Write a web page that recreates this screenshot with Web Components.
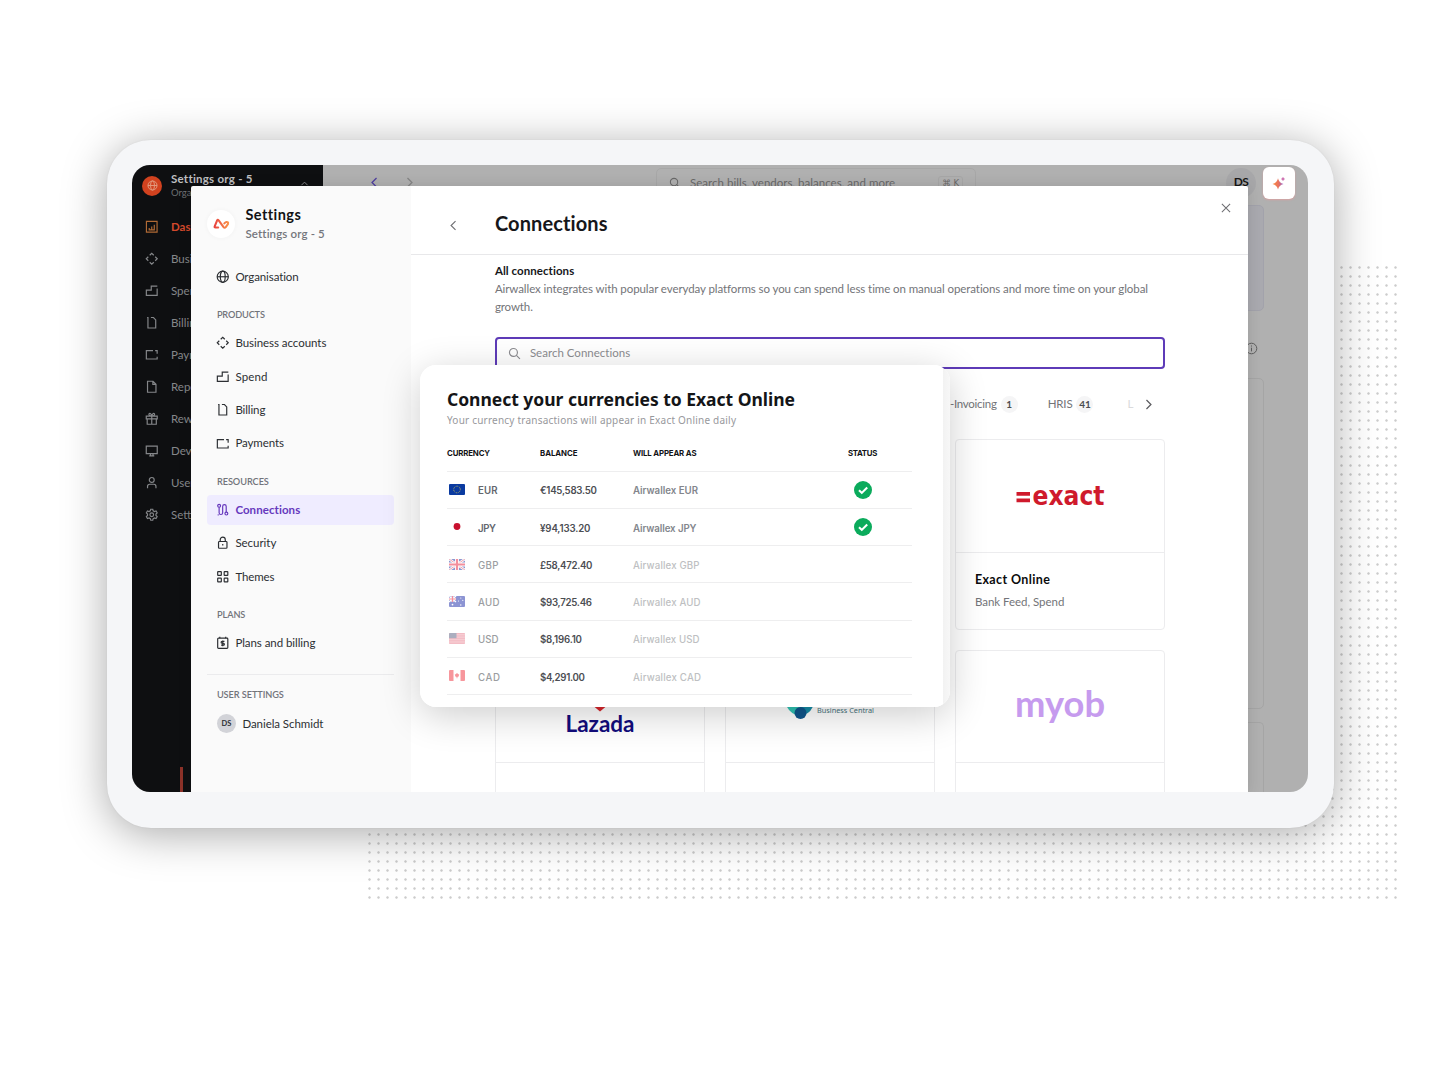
<!DOCTYPE html>
<html lang="en">
<head>
<meta charset="utf-8">
<title>Connections</title>
<style>
  html, body { margin: 0; background: #fff; }
  body {
    width: 1440px;
    height: 1068px;
    overflow: hidden;
    font-family: "Lato", "Liberation Sans", sans-serif;
    color: #2c2f33;
  }
</style>
</head>
<body>
<tablet-stage></tablet-stage>

<script>
// shadow root helper
const mount = function (elem, css, html) {
  const root = elem.attachShadow({ mode: "open" });
  root.innerHTML = `<style>*{box-sizing:border-box}${css}</style>${html}`;
  return root;
}

// icon drawings, 16 x 16 grid
const icons = {
  globe: '<circle cx="8" cy="8" r="6.6"/><ellipse cx="8" cy="8" rx="2.9" ry="6.6"/><path d="M1.4 8h13.2"/>',
  diamond: '<path d="M5.6 3.9 8 1.5l2.4 2.4M12.1 5.6 14.5 8l-2.4 2.4M10.4 12.1 8 14.5l-2.4-2.4M3.9 10.4 1.5 8l2.4-2.4"/>',
  spend: '<path d="M14.6 2.5H7.4v4.8H1.6v6.2h12.8V5.2"/>',
  billing: '<path d="M2.5 1.8h1v12.4h9.200V4.6L10 1.8H7"/>',
  payments: '<path d="M9.500 3.2H1.6v9.800h12.8v-2.600M14.4 6.800V3.2H12"/>',
  doc: '<path d="M3 1.5h6.5L13 5v9.5H3zM9.3 1.7V5.2h3.5"/>',
  gift: '<path d="M1.5 4.8h13v3.4h-13zM2.6 8.2v6.3h10.8V8.2M8 4.8v9.7M8 4.6C6 4.6 4.4 3.9 4.6 2.6 5 1 7.4 1.5 8 4.6 8.6 1.5 11 1 11.4 2.6 11.6 3.9 10 4.6 8 4.6"/>',
  screen: '<path d="M1.5 2.5h13v9h-13zM5 14h6M6.5 11.5V14M9.5 11.5V14"/>',
  user: '<circle cx="8" cy="4.7" r="2.9"/><path d="M3 14.5v-2.2c0-1.5 1-2.5 2.5-2.5h5c1.5 0 2.5 1 2.5 2.5v2.2"/>',
  gear: '<path d="M6.8 1.5h2.4l.5 1.9 1.5.8 1.9-.6 1.3 2.1-1.4 1.4v1.8l1.4 1.4-1.3 2.1-1.9-.6-1.5.8-.5 1.9H6.8l-.5-1.9-1.5-.8-1.9.6-1.3-2.1L3 8.9V7.1L1.6 5.7l1.3-2.1 1.9.6 1.5-.8z"/><circle cx="8" cy="8" r="2.2"/>',
  chart: '<path d="M1.7 1.7h12.6v12.6H1.7z"/><path d="M5 11.5V9.5M8 11.5V7.8M11 11.5V5.5M4.3 11.7h7.4"/>',
  link: '<circle cx="3.7" cy="3.3" r="1.7"/><path d="M3.7 5v6.5a2.1 2.1 0 0 0 4.2 0V4a2.1 2.1 0 0 1 4.2 0v6.8M2 14h1.2"/><circle cx="12.3" cy="12.5" r="1.7"/>',
  lock: '<rect x="3" y="6.5" width="10" height="8" rx="1"/><path d="M5 6.5V4.3a3 3 0 0 1 6 0v2.2M8 9.6v1.8"/>',
  grid: '<rect x="2" y="2" width="4.3" height="4.3" rx=".5"/><rect x="9.7" y="2" width="4.3" height="4.3" rx=".5"/><rect x="2" y="9.7" width="4.3" height="4.3" rx=".5"/><rect x="9.7" y="9.7" width="4.3" height="4.3" rx=".5"/>',
  plan: '<rect x="2" y="2.6" width="12" height="12" rx="1"/><path d="M4.5 1v1.6M11.5 1v1.6M10 6.3H7.2a1.1 1.1 0 0 0 0 2.3h1.6a1.1 1.1 0 0 1 0 2.3H6M8 5.2v6.8"/>',
  search: '<circle cx="6.7" cy="6.7" r="4.9"/><path d="m10.3 10.3 4.4 4.4"/>',
  left: '<path d="M10.5 2.5 5 8l5.5 5.5"/>',
  right: '<path d="M5.5 2.5 11 8l-5.5 5.5"/>',
  up: '<path d="M3.5 10.5 8 6l4.5 4.5"/>',
  close: '<path d="m2.5 2.5 11 11M13.5 2.5l-11 11"/>',
  info: '<circle cx="8" cy="8" r="6.5"/><path d="M8 7v4.5M8 4.3v1.3"/>'
};

class UiIcon extends HTMLElement {
  connectedCallback() {
    const size = this.getAttribute("size") || 13.5;
    const weight = this.getAttribute("weight") || 1.4;
    mount(this, `:host{display:block;flex:none;width:${size}px;height:${size}px} svg{display:block}`, `
      <svg width="${size}" height="${size}" viewBox="0 0 16 16" fill="none" stroke="currentColor" stroke-width="${weight}">
        ${icons[this.getAttribute("name")]}
      </svg>`);
  }
}

// Text run, tracked out or in to the width given in "w"
class UiText extends HTMLElement {
  connectedCallback() {
    const root = mount(this, ":host{display:block;white-space:nowrap;line-height:1.2}", "<span><slot></slot></span>");
    const w = parseFloat(this.getAttribute("w"));
    if (!w) return;
    const span = root.querySelector("span");
    const natural = span.getBoundingClientRect().width;
    span.style.letterSpacing = (w - natural) / (this.textContent.length - 1) + "px";
  }
}

// flags, 16 x 11 grid
const flags = {
  EUR: '<path fill="#0a3aa0" d="M0 0h16v11H0z"/><circle cx="8" cy="5.5" r="3.3" fill="none" stroke="#d8c95a" stroke-width=".9" stroke-dasharray=".8 .93"/>',
  JPY: '<path fill="#fff" d="M0 0h16v11H0z"/><circle cx="8" cy="5.5" r="3.4" fill="#c8102e"/>',
  GBP: '<path fill="#1b2fa0" d="M0 0h16v11H0z"/><path stroke="#fff" stroke-width="2.4" d="m0 0 16 11M16 0 0 11"/><path stroke="#e0304a" stroke-width=".9" d="m0 0 16 11M16 0 0 11"/><path stroke="#fff" stroke-width="4" d="M8 0v11M0 5.5h16"/><path stroke="#e8203c" stroke-width="2.2" d="M8 0v11M0 5.5h16"/>',
  AUD: '<path fill="#1c2ba8" d="M0 0h16v11H0z"/><path stroke="#fff" stroke-width="1.4" d="m0 0 7 6M7 0 0 6"/><path stroke="#fff" stroke-width="2.2" d="M3.5 0v6M0 3h7"/><path stroke="#e8203c" stroke-width="1.2" d="M3.5 0v6M0 3h7"/><g fill="#fff"><circle cx="3.5" cy="8.6" r=".9"/><circle cx="11.8" cy="2" r=".6"/><circle cx="11.8" cy="9" r=".7"/><circle cx="9.5" cy="5" r=".6"/><circle cx="13.8" cy="4.3" r=".6"/></g>',
  USD: '<path fill="#f2aab5" d="M0 0h16v11H0z"/><path stroke="#e56a7c" stroke-width=".8" d="M0 .5h16M0 2.2h16M0 3.9h16M0 5.6h16M0 7.3h16M0 9h16M0 10.6h16"/><path fill="#596080" d="M0 0h7.5v5.2H0z"/>',
  CAD: '<path fill="#fff" d="M0 0h16v11H0z"/><path fill="#f0303c" d="M0 0h4.5v11H0zM11.5 0H16v11h-4.5zM8 2.8l.9 1.3 1.3.4-.6 1.9-1.2.6v1.2h-.8V7l-1.2-.6-.6-1.9 1.3-.4z"/>'
};

class CountryFlag extends HTMLElement {
  connectedCallback() {
    mount(this, ":host{display:block;flex:none;width:16px;height:11px} svg{display:block;border-radius:1px}",
      `<svg width="16" height="11" viewBox="0 0 16 11">${flags[this.getAttribute("code")]}</svg>`);
  }
}

// Application behind the dialog
const appNav = [
  ["chart", "Dash"], ["diamond", "Busin"], ["spend", "Spen"],
  ["billing", "Billin"], ["payments", "Paym"], ["doc", "Repo"],
  ["gift", "Rewa"], ["screen", "Deve"], ["user", "User"], ["gear", "Settin"]
];

class AppSidebar extends HTMLElement {
  connectedCallback() {
    mount(this, `
      :host { display: flex; flex-direction: column; position: relative; width: 191px; background: #0e0f11; color: #85878a; font-size: 11.5px; overflow: hidden; }
      header { display: flex; align-items: center; gap: 9px; height: 41px; padding: 0 13px 0 10px; }
      .mark { display: flex; align-items: center; justify-content: center; width: 20px; height: 20px; border-radius: 50%; background: #d1421f; color: #e29c80; }
      .org { flex: 1; }
      .org ui-text:first-child { color: #bfbfc0; font-weight: 700; font-size: 11.5px; }
      .org ui-text:last-child { color: #6d6f73; font-size: 9.5px; margin-top: 1px; }
      header > ui-icon { margin-top: -5px; }
      nav { padding-top: 5px; }
      .row { display: flex; align-items: center; gap: 12.5px; height: 32px; padding-left: 13px; }
      .row:first-child { color: #d3492c; font-weight: 700; }
      .row:first-child ui-icon { color: #b06a35; }
      .row ui-text { width: 21px; overflow: hidden; }
      i { position: absolute; left: 48px; bottom: 0; width: 3px; height: 25px; background: #8d3229; }
    `, `
      <header>
        <span class="mark"><ui-icon name="globe" size="11"></ui-icon></span>
        <div class="org"><ui-text w="81">Settings org - 5</ui-text><ui-text>Orga</ui-text></div>
        <ui-icon name="up" size="11"></ui-icon>
      </header>
      <nav>${appNav.map(([icon, label]) => `<div class="row"><ui-icon name="${icon}"></ui-icon><ui-text>${label}</ui-text></div>`).join("")}</nav>
      <i></i>`);
  }
}

class AppBackdrop extends HTMLElement {
  connectedCallback() {
    mount(this, `
      :host { display: flex; flex-direction: column; flex: 1; background: #b0b0b0; color: #696969; }
      .bar { display: flex; align-items: center; height: 35px; padding: 0 67px 0 45px; }
      .bar > ui-icon:first-child { color: #4f3fa0; }
      .bar > ui-icon:nth-child(2) { margin-left: 22px; color: #858585; }
      .find { display: flex; align-items: center; gap: 9px; width: 320px; height: 30px; margin-left: 240px; padding: 0 12px; border: 1px solid #a7a7a7; border-radius: 5px; font-size: 11.5px; }
      kbd { margin-left: auto; padding: 0 3px; border: 1px solid #a7a7a7; border-radius: 3px; font: 8.5px/12px "DejaVu Sans", sans-serif; }
      .who { display: flex; align-items: center; justify-content: center; margin-left: auto; margin-right: -15px; width: 30px; height: 30px; border-radius: 50%; background: #a7a7a9; color: #161616; font-weight: 700; font-size: 12px; }
      .body { display: flex; flex-direction: column; margin: 5px 44.5px 0 0; flex: 1; }
      .a { height: 106px; background: #a9a9af; border: 1px solid #a2a2ab; border-radius: 5px; }
      .mid { display: flex; justify-content: flex-end; align-items: center; height: 67px; padding: 7px 6px 0 0; color: #5b5b5b; }
      .b { height: 331px; margin-bottom: 13px; border: 1px solid #a5a5a5; border-radius: 5px; }
      .c { flex: 1; border: 1px solid #a5a5a5; border-bottom: 0; border-radius: 5px 5px 0 0; }
    `, `
      <div class="bar">
        <ui-icon name="left" size="13" weight="1.6"></ui-icon>
        <ui-icon name="right" size="13" weight="1.6"></ui-icon>
        <div class="find"><ui-icon name="search" size="12"></ui-icon><ui-text w="205">Search bills, vendors, balances, and more</ui-text><kbd>⌘ K</kbd></div>
        <div class="who"><ui-text w="15">DS</ui-text></div>
      </div>
      <div class="body"><div class="a"></div><div class="mid"><ui-icon name="info" size="13" weight="1.2"></ui-icon></div><div class="b"></div><div class="c"></div></div>`);
  }
}

// Settings navigation
const settingsNav = [
  ["globe", "Organisation", 63.5],
  ["", "PRODUCTS", 48],
  ["diamond", "Business accounts", 91], ["spend", "Spend", 32], ["billing", "Billing", 30], ["payments", "Payments", 48.5],
  ["", "RESOURCES", 52],
  ["link", "Connections", 65], ["lock", "Security", 41], ["grid", "Themes", 39],
  ["", "PLANS", 28.5],
  ["plan", "Plans and billing", 80]
];

class SettingsNav extends HTMLElement {
  connectedCallback() {
    mount(this, `
      :host { display: flex; flex-direction: column; flex: none; width: 220px; padding: 0 17px 0 16px; background: #fafafa; font-size: 11.5px; }
      header { display: flex; align-items: center; gap: 10px; height: 74px; padding-top: 1px; }
      .logo { display: flex; align-items: center; justify-content: center; width: 28px; height: 28px; margin-top: 1px; border-radius: 50%; background: #fff; box-shadow: 0 0 5px rgba(0,0,0,.04); }
      h2 { margin: 0 0 3px; font-size: 14.5px; color: #111214; }
      .sub { font-size: 11.5px; font-weight: 600; color: #74767c; }
      .row { display: flex; align-items: center; gap: 5.5px; height: 29.6px; margin: 1.9px 0; padding-left: 9px; border-radius: 4px; }
      .row.active { background: #efecff; color: #6638bd; font-weight: 700; }
      .label { height: 33.1px; padding: 16px 0 0 9.5px; font-size: 9.2px; font-weight: 600; color: #72747a; }
      hr { height: 1px; width: 100%; margin: 14.5px 0 0; border: 0; background: #ebebed; }
      .last { height: 26px; padding-top: 14px; }
      .me { display: flex; align-items: center; gap: 6.5px; padding: 13px 0 0 9.5px; }
      .me b { width: 19px; height: 19px; border-radius: 50%; background: #d2d3d8; font-size: 7.5px; line-height: 19px; text-align: center; }
    `, `
      <header>
        <span class="logo"><svg width="17" height="12.5" viewBox="0 0 18 13" fill="none" stroke-width="2.2" stroke-linejoin="round" stroke-linecap="round">
          <defs><linearGradient id="g"><stop stop-color="#e8443f"/><stop offset="1" stop-color="#f9924a"/></linearGradient></defs>
          <path stroke="url(#g)" d="M5.5 10H2.6Q1.3 10 1.8 8.7L4.4 2.5Q5 1.3 6 2.4L11.2 9.5Q12.3 11 13.5 9.5L15.8 6.3Q16.6 4 14.3 4.1Q13.3 4.2 12 5.6"/></svg></span>
        <div><h2><ui-text w="55">Settings</ui-text></h2><ui-text class="sub" w="79">Settings org - 5</ui-text></div>
      </header>
      ${settingsNav.map(([icon, label, w]) => icon
        ? `<div class="row${label === "Connections" ? " active" : ""}"><ui-icon name="${icon}"></ui-icon><ui-text w="${w}">${label}</ui-text></div>`
        : `<div class="label"><ui-text w="${w}">${label}</ui-text></div>`).join("")}
      <hr>
      <div class="label last"><ui-text w="67">USER SETTINGS</ui-text></div>
      <div class="me"><b>DS</b><ui-text w="81">Daniela Schmidt</ui-text></div>`);
  }
}

class ConnectionCard extends HTMLElement {
  connectedCallback() {
    mount(this, `
      :host { display: block; height: 191px; border: 1px solid #ececee; border-radius: 4px; }
      .logo { display: flex; align-items: center; justify-content: center; height: 112.5px; border-bottom: 1px solid #ececee; }
      .text { padding: 19px 19px; }
    `, `<div class="logo"><slot name="logo"></slot></div><div class="text"><slot></slot></div>`);
  }
}

class ConnectionsPage extends HTMLElement {
  connectedCallback() {
    mount(this, `
      :host { display: block; flex: 1; background: #fff; font-size: 11.5px; color: #737478; }
      header { display: flex; height: 69px; padding: 0 16.5px 0 35.5px; border-bottom: 1px solid #e8e8ea; }
      header ui-icon:first-child { margin-top: 33px; color: #6e6e72; }
      h1 { margin: 24.5px auto 0 35px; font-size: 20px; line-height: 24px; color: #16171a; }
      header ui-icon:last-child { margin-top: 16px; color: #6e6e72; }
      main { padding: 9px 0 0 83.5px; width: 753.5px; }
      .t { font-weight: 700; color: #16171a; margin-bottom: 4px; }
      .d { margin-bottom: 4px; }
      .find { display: flex; align-items: center; gap: 9px; height: 32px; margin-top: 24px; padding: 0 11px; border: 2px solid #5e3bb8; border-radius: 4px; color: #8c8c90; }
      .tabs { display: flex; align-items: center; height: 70px; padding-left: 455px; }
      .tabs b { width: 17px; height: 17px; margin: 0 30px 0 4px; border-radius: 9px; background: #f5f5f6; color: #4c4d50; font-size: 10px; line-height: 17px; text-align: center; }
      .tabs .fade { color: #dadadc; margin-left: 4px; }
      .tabs ui-icon { margin-left: 9px; color: #5a5a5e; }
      .cards { display: grid; grid-template-columns: repeat(3, 210px); column-gap: 20px; row-gap: 19.5px; }
      .name { font-size: 12.5px; font-weight: 700; color: #0b0b0d; margin-bottom: 8px; }
      svg { display: block; overflow: visible; }
    `, `
      <header>
        <ui-icon name="left" size="13"></ui-icon>
        <h1><ui-text w="113">Connections</ui-text></h1>
        <ui-icon name="close" size="12"></ui-icon>
      </header>
      <main>
        <ui-text class="t" w="79.5">All connections</ui-text>
        <ui-text class="d" w="653.5">Airwallex integrates with popular everyday platforms so you can spend less time on manual operations and more time on your global</ui-text>
        <ui-text w="38">growth.</ui-text>
        <div class="find"><ui-icon name="search" size="13"></ui-icon><ui-text w="100.5">Search Connections</ui-text></div>
        <div class="tabs">
          <ui-text w="47">-Invoicing</ui-text><b>1</b>
          <ui-text w="25">HRIS</ui-text><b>41</b>
          <ui-text class="fade">L</ui-text>
          <ui-icon name="right" size="13" weight="1.5"></ui-icon>
        </div>
        <div class="cards">
          <connection-card></connection-card>
          <connection-card></connection-card>
          <connection-card>
            <svg slot="logo" width="90" height="34" viewBox="0 0 90 34" fill="#cf1a2c">
              <path d="M1.5 13H15v3.8H1.5zM1.5 19.5H15v3.8H1.5z"/>
              <text x="17.5" y="26" font-family="DejaVu Sans" font-weight="700" font-size="26.5" textLength="72" lengthAdjust="spacingAndGlyphs">exact</text>
            </svg>
            <ui-text class="name" w="75">Exact Online</ui-text>
            <ui-text w="89.5">Bank Feed, Spend</ui-text>
          </connection-card>
          <connection-card>
            <svg slot="logo" width="90" height="70" viewBox="0 0 90 70">
              <path fill="#d8262c" d="M36 32h18l-9 7.5z"/><path fill="#f26a3d" d="M36 30h9v5z"/>
              <text x="10.5" y="60" fill="#120c7c" font-family="Lato" font-weight="700" font-size="22" textLength="69" lengthAdjust="spacingAndGlyphs">Lazada</text>
            </svg>
          </connection-card>
          <connection-card>
            <svg slot="logo" width="90" height="40" viewBox="0 0 90 40">
              <path fill="#30c4b4" d="M1 16h27l-7 9-10 3q-9-4-10-12z"/><path fill="#158ba6" d="M13 16h16q-2 9-10 12z"/><circle cx="15.5" cy="26" r="6" fill="#0f568c"/>
              <text x="32" y="25.5" fill="#46727c" font-family="Noto Sans" font-size="7.5" textLength="57" lengthAdjust="spacingAndGlyphs">Business Central</text>
            </svg>
          </connection-card>
          <connection-card>
            <svg slot="logo" width="90" height="56" viewBox="0 0 90 56">
              <text x="0" y="37.5" fill="#c69bee" font-family="Lato" font-weight="700" font-size="37" textLength="90" lengthAdjust="spacingAndGlyphs">myob</text>
            </svg>
          </connection-card>
        </div>
      </main>`);
  }
}

class SettingsDialog extends HTMLElement {
  connectedCallback() {
    mount(this, `
      :host { position: absolute; left: 59.4px; top: 21px; right: 60px; bottom: -1px; display: flex; overflow: hidden; border-radius: 2px 2px 0 0; box-shadow: 0 0 14px rgba(0,0,0,.12); }
    `, `<settings-nav></settings-nav><connections-page></connections-page>`);
  }
}

// Currency table in the floating card
const currencies = [
  ["EUR", 19.5, "€145,583.50", 57, 65, true],
  ["JPY", 18, "¥94,133.20", 50.5, 63.5, true],
  ["GBP", 20.5, "£58,472.40", 52.5, 66.5, false],
  ["AUD", 21.5, "$93,725.46", 52, 67.5, false],
  ["USD", 20.5, "$8,196.10", 42, 66.5, false],
  ["CAD", 22, "$4,291.00", 45, 68, false]
];

class CurrencyCard extends HTMLElement {
  connectedCallback() {
    mount(this, `
      :host { position: absolute; left: 420px; top: 365px; width: 530px; height: 341.5px; padding: 23px 38px 0 27px; border-radius: 16px;
        background: linear-gradient(90deg, #fff 523px, #f2f2f2 523px, #f7f7f7); box-shadow: 0 8px 38px rgba(0,0,0,.2); }
      .title { font: 700 17.5px/22px "Noto Sans", sans-serif; color: #141517; }
      .title ui-text { line-height: 22px; }
      .sub { font: 10px/14px "Noto Sans", sans-serif; color: #97989c; margin-top: 3px; }
      .sub ui-text { line-height: 14px; }
      .row { display: grid; grid-template-columns: 93px 93px 180px 1fr; align-items: center; height: 37.25px; border-bottom: 1px solid #eeeeef; font: 600 9.7px "Inter", sans-serif; color: #83868c; }
      .head { height: 44.5px; padding-top: 9px; font-size: 7.8px; font-weight: 700; color: #121316; }
      .head > :last-child { justify-self: center; }
      .cur { display: flex; align-items: center; gap: 13.5px; padding-left: 1.5px; color: #63676d; }
      .row:not(.head) ui-text { padding-top: 3px; }
      .bal { color: #4c4e53; }
      .off country-flag { opacity: .5; }
      .off .cur { color: #9b9da1; font-weight: 500; }
      .off .as { color: #bebfc2; font-weight: 500; }
      svg { display: block; justify-self: center; }
    `, `
      <div class="title"><ui-text w="348">Connect your currencies to Exact Online</ui-text></div>
      <div class="sub"><ui-text w="289">Your currency transactions will appear in Exact Online daily</ui-text></div>
      <div class="row head"><ui-text w="43">CURRENCY</ui-text><ui-text w="37.5">BALANCE</ui-text><ui-text w="63.5">WILL APPEAR AS</ui-text><ui-text w="29.5">STATUS</ui-text></div>
      ${currencies.map(([code, cw, amount, aw, nw, ok]) => `
        <div class="row${ok ? "" : " off"}">
          <div class="cur"><country-flag code="${code}"></country-flag><ui-text w="${cw}">${code}</ui-text></div>
          <ui-text class="bal" w="${aw}">${amount}</ui-text>
          <ui-text class="as" w="${nw}">Airwallex ${code}</ui-text>
          ${ok ? '<svg width="18" height="18" viewBox="0 0 18 18"><circle cx="9" cy="9" r="9" fill="#0bab5c"/><path d="m5 9.2 2.8 2.7 5.4-5.4" fill="none" stroke="#fff" stroke-width="2.1"/></svg>' : ""}
        </div>`).join("")}`);
  }
}

class TabletStage extends HTMLElement {
  connectedCallback() {
    mount(this, `
      :host { display: block; position: relative; width: 1440px; height: 1068px; padding: 140px 0 0 107px; box-sizing: border-box; background: #fff; }
      .dots { position: absolute; left: 364.5px; top: 262.5px; width: 1036px; height: 639px; background: radial-gradient(circle, rgba(0,0,0,.2) .8px, transparent 1.6px) 0 0 / 9.01px 9px; }
      .frame { position: relative; width: 1227px; height: 688px; padding: 25px; border-radius: 44px; background: #f5f6f8; box-shadow: 0 6px 44px rgba(0,0,0,.34), 0 0 2px rgba(0,0,0,.06); }
      .screen { position: relative; display: flex; width: 1176px; height: 627px; overflow: hidden; border-radius: 18px; }
      .spark { position: absolute; left: 1131px; top: 2px; display: flex; align-items: center; justify-content: center; width: 32px; height: 31.5px; border-radius: 6px; background: #fff; box-shadow: 0 1px 2px rgba(240,150,150,.6); }
    `, `
      <div class="dots"></div>
      <div class="frame">
        <div class="screen">
          <app-sidebar></app-sidebar>
          <app-backdrop></app-backdrop>
          <settings-dialog></settings-dialog>
          <div class="spark"><svg width="14" height="14" viewBox="0 0 14 14">
            <defs><linearGradient id="s"><stop stop-color="#fb8a3a"/><stop offset=".55" stop-color="#e8735f"/><stop offset="1" stop-color="#9262d8"/></linearGradient></defs>
            <path fill="url(#s)" d="M6 2.2Q7 7 11.5 8 7 9 6 13.6 5 9 .5 8 5 7 6 2.2"/><path fill="#cc6cae" d="M11 .8q.5 1.7 2.2 2.2-1.7.5-2.2 2.2-.5-1.7-2.2-2.2 1.7-.5 2.2-2.2"/>
          </svg></div>
        </div>
      </div>
      <currency-card></currency-card>`);
  }
}

customElements.define("ui-icon", UiIcon);
customElements.define("ui-text", UiText);
customElements.define("country-flag", CountryFlag);
customElements.define("app-sidebar", AppSidebar);
customElements.define("app-backdrop", AppBackdrop);
customElements.define("settings-nav", SettingsNav);
customElements.define("connection-card", ConnectionCard);
customElements.define("connections-page", ConnectionsPage);
customElements.define("settings-dialog", SettingsDialog);
customElements.define("currency-card", CurrencyCard);
customElements.define("tablet-stage", TabletStage);
</script>
</body>
</html>
